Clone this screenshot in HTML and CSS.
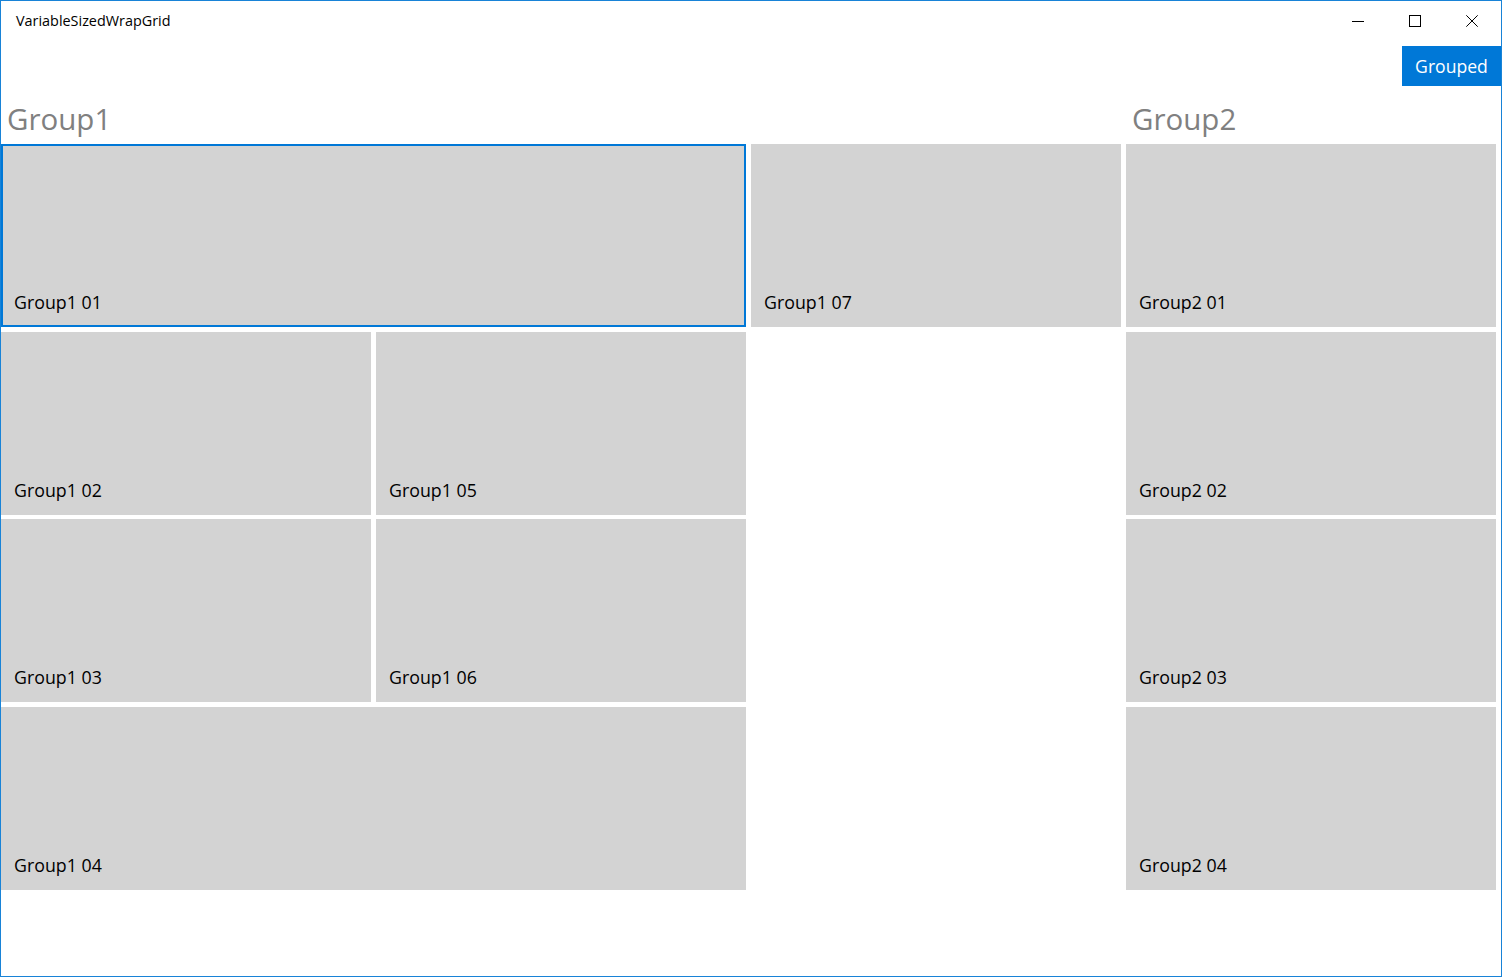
FILE: index.html
```html
<!DOCTYPE html>
<html lang="en">
<head>
<meta charset="utf-8">
<title>VariableSizedWrapGrid</title>
<link rel="stylesheet" href="styles.css">
</head>
<body>
<div class="window">
  <div class="titlebar">
    <div class="title">VariableSizedWrapGrid</div>
    <div class="captions">
      <div class="cap">
        <svg width="12" height="12" viewBox="0 0 12 12"><path d="M0 6.5H12" stroke="#000" stroke-width="1" fill="none"/></svg>
      </div>
      <div class="cap">
        <svg width="12" height="12" viewBox="0 0 12 12"><rect x="0.5" y="0.5" width="11" height="11" stroke="#000" stroke-width="1" fill="none"/></svg>
      </div>
      <div class="cap">
        <svg width="12" height="12" viewBox="0 0 12 12"><path d="M0.3 0.3L11.7 11.7M11.7 0.3L0.3 11.7" stroke="#000" stroke-width="1" fill="none"/></svg>
      </div>
    </div>
  </div>
  <div class="commandrow">
    <button class="grouped">Grouped</button>
  </div>
  <div class="groups">
    <section class="group">
      <h2 class="group-header">Group1</h2>
      <div class="grid three">
        <div class="tile wide selected"><span class="label">Group1 01</span></div>
        <div class="tile"><span class="label">Group1 02</span></div>
        <div class="tile"><span class="label">Group1 03</span></div>
        <div class="tile wide"><span class="label">Group1 04</span></div>
        <div class="tile"><span class="label">Group1 05</span></div>
        <div class="tile"><span class="label">Group1 06</span></div>
        <div class="tile"><span class="label">Group1 07</span></div>
      </div>
    </section>
    <section class="group">
      <h2 class="group-header">Group2</h2>
      <div class="grid one">
        <div class="tile"><span class="label">Group2 01</span></div>
        <div class="tile"><span class="label">Group2 02</span></div>
        <div class="tile"><span class="label">Group2 03</span></div>
        <div class="tile"><span class="label">Group2 04</span></div>
      </div>
    </section>
  </div>
</div>
</body>
</html>
```
FILE: styles.css
```css
* { box-sizing: border-box; }
html, body { margin: 0; padding: 0; background: #fff; }
body {
  font-family: "Open Sans", "Noto Sans", "Liberation Sans", sans-serif;
  color: #000;
}
.window {
  width: 1502px;
  height: 977px;
  border: 1px solid #1883d7;
  display: flex;
  flex-direction: column;
  overflow: hidden;
}
.titlebar {
  height: 40px;
  display: flex;
  align-items: center;
  justify-content: space-between;
  flex: none;
}
.title {
  padding-left: 15px;
  font-size: 14.4px;
  line-height: 20px;
  margin-top: -1px;
}
.captions { display: flex; height: 100%; margin-right: 1px; }
.cap {
  width: 57px;
  height: 100%;
  display: flex;
  align-items: center;
  justify-content: center;
}
.cap svg { display: block; }
.commandrow {
  display: flex;
  justify-content: flex-end;
  margin-top: 5px;
  flex: none;
}
.grouped {
  width: 99px;
  height: 40px;
  border: none;
  background: #0078d7;
  color: #fff;
  font-family: inherit;
  font-size: 17.6px;
  padding: 0;
  margin: 0;
  line-height: 40px;
}
.groups {
  display: flex;
  gap: 5px;
  align-items: flex-start;
}
.group-header {
  margin: 13px 0 5px 0;
  padding-left: 6px;
  font-weight: normal;
  font-size: 29.5px;
  line-height: 40px;
  color: #808080;
}
.grid {
  display: grid;
  grid-template-rows: repeat(4, 183px);
  grid-auto-flow: column;
  column-gap: 5px;
  row-gap: 4.667px;
}
.grid.three { grid-template-columns: repeat(3, 370px); }
.grid.one { grid-template-columns: 370px; }
.tile {
  background: #d3d3d3;
  display: flex;
  align-items: flex-end;
  padding: 0 13px 13px 13px;
}
.tile.wide { grid-column: span 2; }
.tile.selected { box-shadow: inset 0 0 0 2px #0078d7; }
.label {
  font-size: 17.8px;
  line-height: 24px;
}
```
